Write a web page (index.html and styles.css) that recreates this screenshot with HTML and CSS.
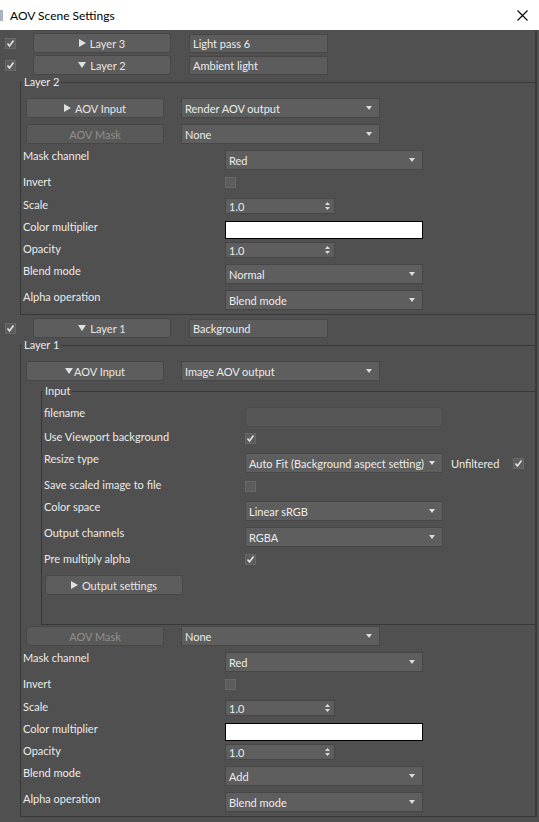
FILE: index.html
```html
<!DOCTYPE html>
<html lang="en">
<head>
    <meta charset="UTF-8">
    <title>AOV Scene Settings</title>
    <link rel="stylesheet" href="styles.css">
</head>
<body>
    <div class="titlebar">
        <span class="app-icon"></span>
        <span class="title">AOV Scene Settings</span>
        <svg class="close" viewBox="0 0 11 11"><path d="M0.5 0.5 L10.5 10.5 M10.5 0.5 L0.5 10.5" stroke="#000" stroke-width="1.1" fill="none"/></svg>
    </div>

    <div class="panel">
        <div class="sheet">
            <!-- row scrolled off the top -->
            <div class="layer-row clipped">
                <div class="btn layer-btn"></div>
            </div>

            <div class="layer-row">
                <span class="check on"><svg viewBox="0 0 9 9"><path d="M1.5 4.5 L3.5 7 L7.5 1.5"/></svg></span>
                <div class="btn layer-btn"><svg class="tri" viewBox="0 0 7 8"><path d="M0 0 L7 4 L0 8Z"/></svg>Layer 3</div>
                <div class="field name-field">Light pass 6</div>
            </div>
            <div class="layer-row">
                <span class="check on"><svg viewBox="0 0 9 9"><path d="M1.5 4.5 L3.5 7 L7.5 1.5"/></svg></span>
                <div class="btn layer-btn"><svg class="tri-down" viewBox="0 0 8 6"><path d="M0 0 L8 0 L4 6Z"/></svg>Layer 2</div>
                <div class="field name-field">Ambient light</div>
            </div>

            <fieldset class="group">
                <legend>Layer 2</legend>
                <div class="aov-row">
                    <div class="btn"><svg class="tri" viewBox="0 0 7 8"><path d="M0 0 L7 4 L0 8Z"/></svg>AOV Input</div>
                    <div class="dropdown">Render AOV output</div>
                </div>
                <div class="aov-row">
                    <div class="btn disabled">AOV Mask</div>
                    <div class="dropdown">None</div>
                </div>

                <div class="prop mt5"><span class="prop-label">Mask channel</span><div class="dropdown">Red</div></div>
                <div class="prop mt5"><span class="prop-label">Invert</span><span class="check"></span></div>
                <div class="prop mt9"><span class="prop-label">Scale</span><div class="spinner">1.0<svg viewBox="0 0 5 10"><path d="M0 4 L2.5 1 L5 4Z M0 6 L2.5 9 L5 6Z"/></svg></div></div>
                <div class="prop mt6"><span class="prop-label">Color multiplier</span><div class="swatch"></div></div>
                <div class="prop mt3"><span class="prop-label">Opacity</span><div class="spinner">1.0<svg viewBox="0 0 5 10"><path d="M0 4 L2.5 1 L5 4Z M0 6 L2.5 9 L5 6Z"/></svg></div></div>
                <div class="prop mt6 flush"><span class="prop-label">Blend mode</span><div class="dropdown">Normal</div></div>
                <div class="prop mt6 flush"><span class="prop-label">Alpha operation</span><div class="dropdown">Blend mode</div></div>
            </fieldset>

            <div class="layer-row layer-one">
                <span class="check on"><svg viewBox="0 0 9 9"><path d="M1.5 4.5 L3.5 7 L7.5 1.5"/></svg></span>
                <div class="btn layer-btn"><svg class="tri-down" viewBox="0 0 8 6"><path d="M0 0 L8 0 L4 6Z"/></svg>Layer 1</div>
                <div class="field name-field">Background</div>
            </div>

            <fieldset class="group">
                <legend>Layer 1</legend>
                <div class="aov-row">
                    <div class="btn tight"><svg class="tri-down" viewBox="0 0 8 6"><path d="M0 0 L8 0 L4 6Z"/></svg>AOV Input</div>
                    <div class="dropdown">Image AOV output</div>
                </div>

                <fieldset class="group inner">
                    <legend>Input</legend>
                    <div class="prop"><span class="prop-label">filename</span><div class="path-field"></div></div>
                    <div class="prop mt3"><span class="prop-label">Use Viewport background</span><span class="check on low"><svg viewBox="0 0 9 9"><path d="M1.5 4.5 L3.5 7 L7.5 1.5"/></svg></span></div>
                    <div class="prop mt8">
                        <span class="prop-label">Resize type</span>
                        <div class="inline-control">
                            <div class="dropdown">Auto Fit (Background aspect setting)</div>
                            <span class="inline-label">Unfiltered</span>
                            <span class="check on"><svg viewBox="0 0 9 9"><path d="M1.5 4.5 L3.5 7 L7.5 1.5"/></svg></span>
                        </div>
                    </div>
                    <div class="prop mt5"><span class="prop-label">Save scaled image to file</span><span class="check low"></span></div>
                    <div class="prop mt8"><span class="prop-label">Color space</span><div class="dropdown">Linear sRGB</div></div>
                    <div class="prop mt5"><span class="prop-label">Output channels</span><div class="dropdown">RGBA</div></div>
                    <div class="prop mt5"><span class="prop-label">Pre multiply alpha</span><span class="check on"><svg viewBox="0 0 9 9"><path d="M1.5 4.5 L3.5 7 L7.5 1.5"/></svg></span></div>
                    <div class="btn output-btn"><svg class="tri" viewBox="0 0 7 8"><path d="M0 0 L7 4 L0 8Z"/></svg>Output settings</div>
                </fieldset>

                <div class="aov-row after-inner">
                    <div class="btn disabled">AOV Mask</div>
                    <div class="dropdown">None</div>
                </div>

                <div class="prop mt5"><span class="prop-label">Mask channel</span><div class="dropdown">Red</div></div>
                <div class="prop mt5"><span class="prop-label">Invert</span><span class="check"></span></div>
                <div class="prop mt9"><span class="prop-label">Scale</span><div class="spinner">1.0<svg viewBox="0 0 5 10"><path d="M0 4 L2.5 1 L5 4Z M0 6 L2.5 9 L5 6Z"/></svg></div></div>
                <div class="prop mt6"><span class="prop-label">Color multiplier</span><div class="swatch"></div></div>
                <div class="prop mt3"><span class="prop-label">Opacity</span><div class="spinner">1.0<svg viewBox="0 0 5 10"><path d="M0 4 L2.5 1 L5 4Z M0 6 L2.5 9 L5 6Z"/></svg></div></div>
                <div class="prop mt6 flush"><span class="prop-label">Blend mode</span><div class="dropdown">Add</div></div>
                <div class="prop mt6 flush"><span class="prop-label">Alpha operation</span><div class="dropdown">Blend mode</div></div>
            </fieldset>
        </div>
    </div>
</body>
</html>
```

FILE: styles.css
```css
* { box-sizing: border-box; }
body { margin: 0; width: 539px; height: 822px; overflow: hidden; background: #505050; color: #ebebeb; font-family: Lato, "Liberation Sans", sans-serif; font-size: 11px; }

.titlebar { height: 30px; background: #fff; color: #000; display: flex; align-items: center; font-size: 12px; }
.app-icon { width: 3px; height: 11px; margin-right: 7px; background: #a9b3bf; }
.title { flex: 1; }
.close { width: 11px; height: 11px; margin-right: 11px; }

.panel { height: 792px; overflow: hidden; background: #505050; }
.sheet { width: 537px; min-height: 100%; border-right: 2px solid #3a3a3a; }

.layer-row { display: flex; align-items: center; height: 20px; margin-top: 2px; }
.layer-row.clipped { margin-top: -19px; padding-left: 33px; }
.layer-row.clipped .layer-btn { margin-left: 0; }
.layer-row.layer-one { margin-top: 3px; }
.layer-row > .check { margin-left: 5px; }
.layer-btn { width: 138px; margin-left: 17px; }
.name-field { width: 139px; height: 19px; margin-left: 18px; }

.btn { display: flex; align-items: center; justify-content: center; gap: 4px; height: 20px; background: #5d5d5d; border: 1px solid #474747; border-radius: 3px; color: #e6e6e6; }
.btn.tight { gap: 1px; }
.btn.disabled { color: #8f8f8f; background: #595959; }
.tri { width: 7px; height: 8px; fill: #e0e0e0; }
.tri-down { width: 8px; height: 6px; fill: #e0e0e0; }

.field { display: flex; align-items: center; padding-left: 3px; background: #5c5c5c; border: 1px solid #474747; color: #ececec; }

.dropdown { display: flex; align-items: center; justify-content: space-between; height: 20px; padding: 0 7px 0 3px; background: #5e5e5e; border: 1px solid #474747; color: #ececec; white-space: nowrap; }
.dropdown::after { content: ""; border-left: 3px solid transparent; border-right: 3px solid transparent; border-top: 4px solid #dcdcdc; }

.check { display: flex; align-items: center; justify-content: center; width: 11px; height: 11px; flex: none; background: #5c5c5c; border: 1px solid #686868; }
.check svg { width: 9px; height: 9px; fill: none; stroke: #e4e4e4; stroke-width: 1.6; }

.group { margin: 0 0 0 20px; padding: 9px 0 4px 1px; min-width: 0; border: 1px solid #383838; border-right: none; }
.group legend { padding: 0 2px; line-height: 14px; color: #ebebeb; }
.group.inner { margin: 3px 0 0 19px; padding: 8px 0 29px 1px; }
.group.inner .prop-label { width: 202px; }

.aov-row { display: flex; align-items: center; height: 20px; }
.aov-row + .aov-row { margin-top: 6px; }
.aov-row.after-inner { margin-top: 1px; }
.aov-row .btn { width: 138px; margin-left: 4px; }
.aov-row .dropdown { width: 199px; margin-left: 17px; }

.prop { display: flex; align-items: flex-start; }
.prop-label { flex: none; width: 203px; padding-left: 1px; line-height: 14px; white-space: nowrap; }
.prop .dropdown { width: 198px; margin-top: 1px; }
.prop.flush .dropdown { margin-top: 0; }
.prop .check { margin-top: 2px; }
.prop .check.low { margin-top: 3px; }
.mt3 { margin-top: 3px; }
.mt5 { margin-top: 5px; }
.mt6 { margin-top: 6px; }
.mt8 { margin-top: 8px; }
.mt9 { margin-top: 9px; }

.spinner { display: flex; align-items: center; justify-content: space-between; width: 110px; height: 16px; padding: 0 4px 0 3px; background: #5e5e5e; border: 1px solid #474747; color: #ececec; }
.spinner svg { width: 5px; height: 10px; fill: #dcdcdc; }
.swatch { width: 198px; height: 18px; margin-top: 1px; background: #fff; border: 1px solid #000; }

.path-field { width: 198px; height: 20px; margin-top: 1px; background: #565656; border: 1px solid #4b4b4b; border-radius: 3px; }
.inline-control { display: flex; align-items: center; height: 20px; margin-top: 1px; }
.inline-control .dropdown { margin-top: 0; }
.inline-label { width: 62px; margin-left: 8px; }
.inline-control .check { margin-top: 1px; }

.output-btn { width: 138px; margin: 9px 0 0 2px; }
```
